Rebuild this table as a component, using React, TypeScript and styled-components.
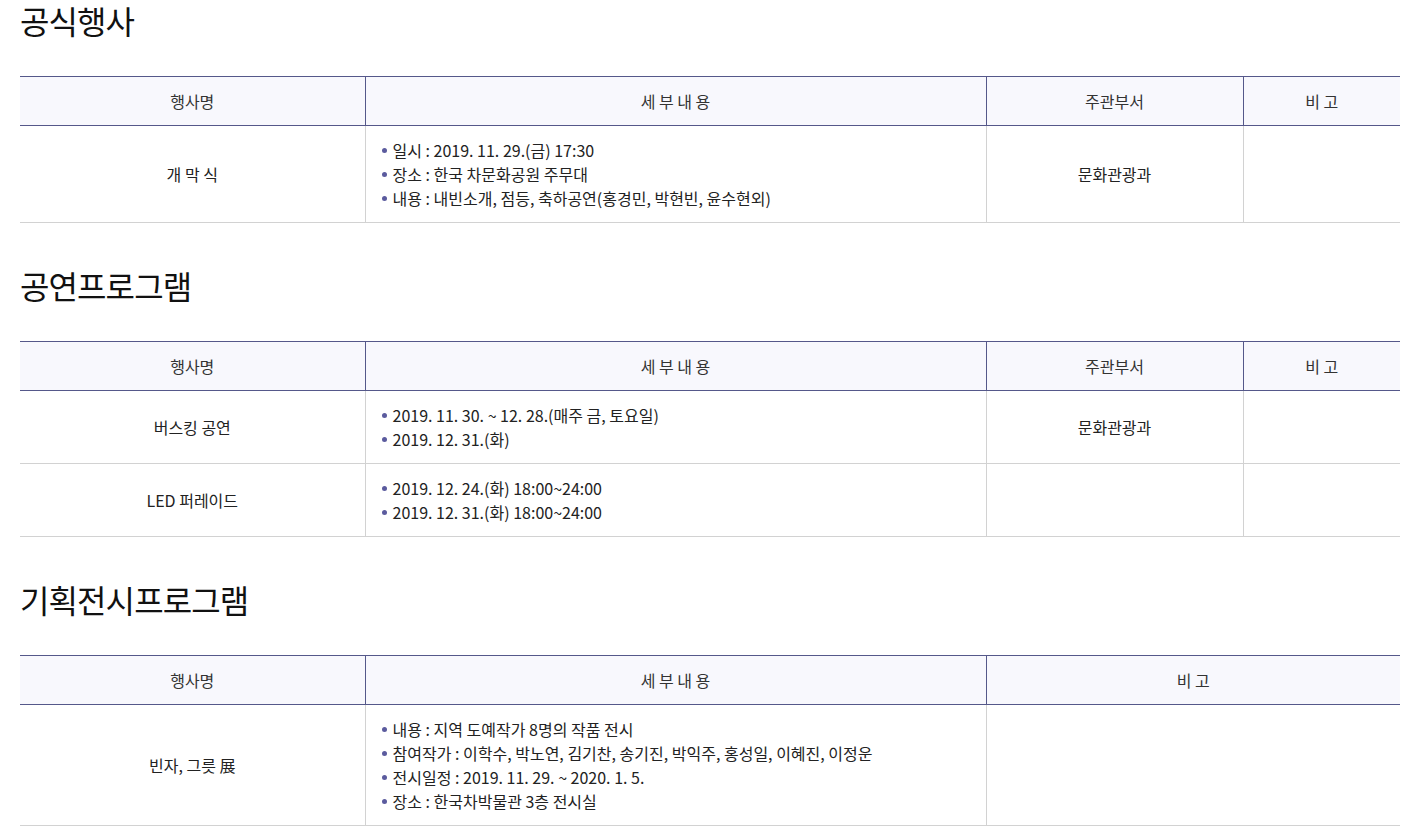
import styled, { createGlobalStyle } from 'styled-components'

const GlobalStyle = createGlobalStyle`
  body {
    margin: 0;
    background: #fff;
    font-family: 'Noto Sans CJK KR', 'Noto Sans', sans-serif;
    color: #333;
  }
`

const Page = styled.div`
  width: 1380px;
  padding: 0 10px 0 20px;
`

const Section = styled.section`
  margin-bottom: 42px;
`

const Title = styled.h2`
  margin: 0 0 36px;
  font-size: 32px;
  line-height: 40px;
  font-weight: 400;
  color: #111;
  letter-spacing: -0.9px;
`

const Table = styled.table`
  width: 100%;
  border-collapse: collapse;
  table-layout: fixed;
  font-size: 16px;
  line-height: 24px;
`

const Th = styled.th`
  height: 24px;
  padding: 12px 10px;
  background: #f8f8fd;
  border-top: 1px solid #55588a;
  border-bottom: 1px solid #55588a;
  border-left: 1px solid #55588a;
  font-weight: 400;
  color: #333;
  text-align: center;
  &:first-child {
    border-left: none;
  }
`

const Td = styled.td<{ $align?: 'left' | 'center' }>`
  padding: 12px 16px;
  border-bottom: 1px solid #d2d2d2;
  border-left: 1px solid #d2d2d2;
  text-align: ${(p) => p.$align ?? 'center'};
  vertical-align: middle;
  color: #222;
  &:first-child {
    border-left: none;
  }
`

const List = styled.ul`
  margin: 0;
  padding: 0;
  list-style: none;
`

const Item = styled.li`
  position: relative;
  padding-left: 11px;
  &::before {
    content: '';
    position: absolute;
    left: 0;
    top: 10px;
    width: 5px;
    height: 5px;
    border-radius: 50%;
    background: #5b5b9e;
  }
`

type Row = { name: string; details: string[]; dept?: string }

const ColGroup = ({ widths }: { widths: string[] }) => (
  <colgroup>
    {widths.map((w, i) => (
      <col key={i} style={{ width: w }} />
    ))}
  </colgroup>
)

function EventTable({ rows, withDept = true }: { rows: Row[]; withDept?: boolean }) {
  return (
    <Table>
      <ColGroup widths={withDept ? ['345px', '621px', '257px', '157px'] : ['345px', '621px', '414px']} />
      <thead>
        <tr>
          <Th>행사명</Th>
          <Th>세 부 내 용</Th>
          {withDept && <Th>주관부서</Th>}
          <Th>비 고</Th>
        </tr>
      </thead>
      <tbody>
        {rows.map((r) => (
          <tr key={r.name}>
            <Td>{r.name}</Td>
            <Td $align="left">
              <List>
                {r.details.map((d) => (
                  <Item key={d}>{d}</Item>
                ))}
              </List>
            </Td>
            {withDept && <Td>{r.dept ?? ''}</Td>}
            <Td />
          </tr>
        ))}
      </tbody>
    </Table>
  )
}

export default function App() {
  return (
    <>
      <GlobalStyle />
      <Page>
        <Section>
          <Title>공식행사</Title>
          <EventTable
            rows={[
              {
                name: '개 막 식',
                details: [
                  '일시 : 2019. 11. 29.(금) 17:30',
                  '장소 : 한국 차문화공원 주무대',
                  '내용 : 내빈소개, 점등, 축하공연(홍경민, 박현빈, 윤수현외)',
                ],
                dept: '문화관광과',
              },
            ]}
          />
        </Section>
        <Section>
          <Title>공연프로그램</Title>
          <EventTable
            rows={[
              {
                name: '버스킹 공연',
                details: ['2019. 11. 30. ~ 12. 28.(매주 금, 토요일)', '2019. 12. 31.(화)'],
                dept: '문화관광과',
              },
              {
                name: 'LED 퍼레이드',
                details: ['2019. 12. 24.(화) 18:00~24:00', '2019. 12. 31.(화) 18:00~24:00'],
              },
            ]}
          />
        </Section>
        <Section>
          <Title>기획전시프로그램</Title>
          <EventTable
            withDept={false}
            rows={[
              {
                name: '빈자, 그릇 展',
                details: [
                  '내용 : 지역 도예작가 8명의 작품 전시',
                  '참여작가 : 이학수, 박노연, 김기찬, 송기진, 박익주, 홍성일, 이혜진, 이정운',
                  '전시일정 : 2019. 11. 29. ~ 2020. 1. 5.',
                  '장소 : 한국차박물관 3층 전시실',
                ],
              },
            ]}
          />
        </Section>
      </Page>
    </>
  )
}
